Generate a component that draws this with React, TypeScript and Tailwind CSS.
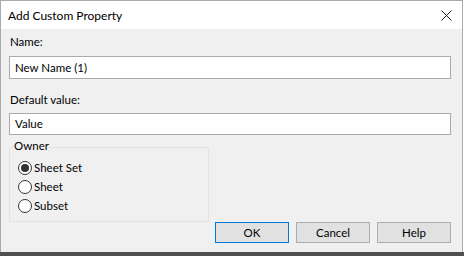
import React from 'react';

const owners = ['Sheet Set', 'Sheet', 'Subset'];

const Radio = ({ label, checked }: { label: string; checked?: boolean }) => (
  <div className="flex h-[19px] items-center">
    <span className="flex h-[14px] w-[14px] items-center justify-center rounded-full border border-[#333333] bg-white">
      {checked && <span className="h-[8px] w-[8px] rounded-full bg-[#333333]" />}
    </span>
    <span className="ml-[2px]">{label}</span>
  </div>
);

const Button = ({ label, primary }: { label: string; primary?: boolean }) => (
  <button
    className={
      primary
        ? 'flex h-[21px] w-[74px] items-center justify-center border border-[#0078d7] bg-[#e1e1e1]'
        : 'flex h-[21px] w-[74px] items-center justify-center border border-[#adadad] bg-[#e1e1e1]'
    }
  >
    {label}
  </button>
);

export default function App() {
  return (
    <div className="h-[256px] w-[464px] bg-white text-[11.5px] leading-[16px] text-black [font-family:Lato,'Noto_Sans',sans-serif]">
      <div className="flex h-[252px] w-[463px] flex-col border border-b-0 border-[#aaaaaa]">
        {/* title bar */}
        <div className="flex h-[28px] items-center justify-between bg-white pl-[7px] pr-[10px]">
          <span className="pt-[1px] text-[12px]">Add Custom Property</span>
          <svg width="11" height="11" viewBox="0 0 11 11" className="mt-[1px]">
            <path d="M0.5 0.5 L10.5 10.5 M10.5 0.5 L0.5 10.5" stroke="#222" strokeWidth="1" fill="none" />
          </svg>
        </div>

        {/* body */}
        <div className="flex flex-1 flex-col bg-[#f0f0f0] pl-[8px] pr-[11px] pt-[5px]">
          <label className="pl-[1px]">Name:</label>
          <div className="mt-[6px] flex h-[23px] items-center border border-[#ababab] bg-white pl-[5px]">New Name (1)</div>

          <label className="mt-[13px] pl-[1px]">Default value:</label>
          <div className="mt-[5px] flex h-[22px] items-center border border-[#ababab] bg-white pl-[5px]">Value</div>

          <div className="mt-[12px] flex items-end justify-between">
            <div className="mb-[21px] h-[75px] w-[200px] border border-[#e2e2e2] pl-[8px]">
              <div className="-ml-[4px] -mt-[9px] mb-[5px] h-[14px] w-fit bg-[#f0f0f0] leading-[14px]">Owner</div>
              {owners.map((o, i) => (
                <Radio key={o} label={o} checked={i === 0} />
              ))}
            </div>
            <div className="flex gap-[7px]">
              <Button label="OK" primary />
              <Button label="Cancel" />
              <Button label="Help" />
            </div>
          </div>
        </div>
      </div>
      <div className="h-[4px] w-[464px] bg-[#505050]" />
    </div>
  );
}
